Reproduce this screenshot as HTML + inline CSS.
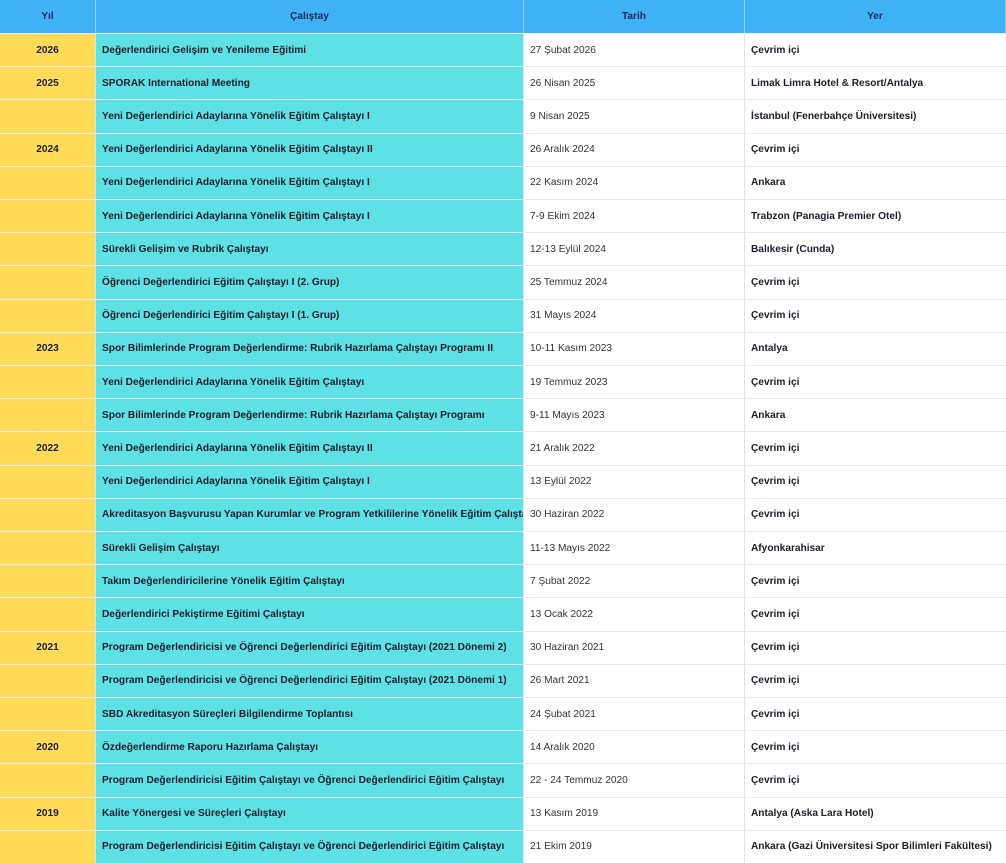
<!DOCTYPE html>
<html><head><meta charset="utf-8"><style>
*{margin:0;padding:0;box-sizing:border-box}
body{width:1006px;height:857px;overflow:hidden;background:#fff;font-family:"Liberation Sans",Arial,sans-serif;font-size:10.15px;color:#1d1d2b;position:relative}
.r{position:absolute;left:0;width:1006px;height:33.2px;border-top:1px solid #e8ecef}
.c{position:absolute;top:0;height:100%;display:flex;align-items:center;white-space:nowrap;overflow:hidden}
.a{left:0;width:96px;justify-content:center;background:#ffdb58;font-weight:bold;border-right:1px solid #e9e3c0}
.b{left:96px;width:428px;padding-left:6px;background:#5de0e6;font-weight:bold;border-right:1px solid #d6eef0}
.d{left:524px;width:221px;padding-left:6px;color:#333;border-right:1px solid #e3e3e3}
.e{left:745px;width:261px;padding-left:6px;font-weight:bold}
.h{top:0;height:33px;background:#3fb1f7;border:none}
.h .c{background:#3fb1f7;justify-content:center;padding:0;font-weight:bold;color:#1a2a55;border-right:1px solid #8fd0fb}
</style></head><body>
<div class="r h"><div class="c a">Yıl</div><div class="c b">Çalıştay</div><div class="c d">Tarih</div><div class="c e">Yer</div></div>
<div id="t"></div>
<script>
var d=[["2026","Değerlendirici Gelişim ve Yenileme Eğitimi","27 Şubat 2026","Çevrim içi"],
["2025","SPORAK International Meeting","26 Nisan 2025","Limak Limra Hotel & Resort/Antalya"],
["","Yeni Değerlendirici Adaylarına Yönelik Eğitim Çalıştayı I","9 Nisan 2025","İstanbul (Fenerbahçe Üniversitesi)"],
["2024","Yeni Değerlendirici Adaylarına Yönelik Eğitim Çalıştayı II","26 Aralık 2024","Çevrim içi"],
["","Yeni Değerlendirici Adaylarına Yönelik Eğitim Çalıştayı I","22 Kasım 2024","Ankara"],
["","Yeni Değerlendirici Adaylarına Yönelik Eğitim Çalıştayı I","7-9 Ekim 2024","Trabzon (Panagia Premier Otel)"],
["","Sürekli Gelişim ve Rubrik Çalıştayı","12-13 Eylül 2024","Balıkesir (Cunda)"],
["","Öğrenci Değerlendirici Eğitim Çalıştayı I (2. Grup)","25 Temmuz 2024","Çevrim içi"],
["","Öğrenci Değerlendirici Eğitim Çalıştayı I (1. Grup)","31 Mayıs 2024","Çevrim içi"],
["2023","Spor Bilimlerinde Program Değerlendirme: Rubrik Hazırlama Çalıştayı Programı II","10-11 Kasım 2023","Antalya"],
["","Yeni Değerlendirici Adaylarına Yönelik Eğitim Çalıştayı","19 Temmuz 2023","Çevrim içi"],
["","Spor Bilimlerinde Program Değerlendirme: Rubrik Hazırlama Çalıştayı Programı","9-11 Mayıs 2023","Ankara"],
["2022","Yeni Değerlendirici Adaylarına Yönelik Eğitim Çalıştayı II","21 Aralık 2022","Çevrim içi"],
["","Yeni Değerlendirici Adaylarına Yönelik Eğitim Çalıştayı I","13 Eylül 2022","Çevrim içi"],
["","Akreditasyon Başvurusu Yapan Kurumlar ve Program Yetkililerine Yönelik Eğitim Çalıştayı","30 Haziran 2022","Çevrim içi"],
["","Sürekli Gelişim Çalıştayı","11-13 Mayıs 2022","Afyonkarahisar"],
["","Takım Değerlendiricilerine Yönelik Eğitim Çalıştayı","7 Şubat 2022","Çevrim içi"],
["","Değerlendirici Pekiştirme Eğitimi Çalıştayı","13 Ocak 2022","Çevrim içi"],
["2021","Program Değerlendiricisi ve Öğrenci Değerlendirici Eğitim Çalıştayı (2021 Dönemi 2)","30 Haziran 2021","Çevrim içi"],
["","Program Değerlendiricisi ve Öğrenci Değerlendirici Eğitim Çalıştayı (2021 Dönemi 1)","26 Mart 2021","Çevrim içi"],
["","SBD Akreditasyon Süreçleri Bilgilendirme Toplantısı","24 Şubat 2021","Çevrim içi"],
["2020","Özdeğerlendirme Raporu Hazırlama Çalıştayı","14 Aralık 2020","Çevrim içi"],
["","Program Değerlendiricisi Eğitim Çalıştayı ve Öğrenci Değerlendirici Eğitim Çalıştayı","22 - 24 Temmuz 2020","Çevrim içi"],
["2019","Kalite Yönergesi ve Süreçleri Çalıştayı","13 Kasım 2019","Antalya (Aska Lara Hotel)"],
["","Program Değerlendiricisi Eğitim Çalıştayı ve Öğrenci Değerlendirici Eğitim Çalıştayı","21 Ekim 2019","Ankara (Gazi Üniversitesi Spor Bilimleri Fakültesi)"]];
var h="";d.forEach(function(r,i){h+='<div class="r" style="top:'+(33+i*33.2)+'px"><div class="c a">'+r[0]+'</div><div class="c b">'+r[1]+'</div><div class="c d">'+r[2]+'</div><div class="c e">'+r[3]+'</div></div>'});
document.getElementById("t").innerHTML=h;
</script>
</body></html>
